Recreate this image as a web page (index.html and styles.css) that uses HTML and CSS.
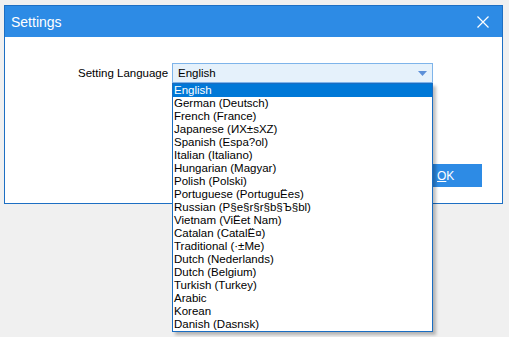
FILE: index.html
```html
<!DOCTYPE html>
<html lang="en">
<head>
    <meta charset="UTF-8">
    <title>Settings</title>
    <link rel="stylesheet" href="styles.css">
</head>
<body>
    <div class="dialog">
        <div class="titlebar">
            <span class="title">Settings</span>
            <button class="close" type="button" aria-label="Close">
                <svg width="12" height="12" viewBox="0 0 12 12">
                    <path d="M0.5 0.5 L11.5 11.5 M11.5 0.5 L0.5 11.5" stroke="#fff" stroke-width="1.2" fill="none"/>
                </svg>
            </button>
        </div>

        <div class="content">
            <div class="row">
                <label class="label">Setting Language</label>
                <div class="select-wrap">
                    <div class="select">
                        <span>English</span>
                        <svg class="arrow" width="9" height="5" viewBox="0 0 9 5">
                            <path d="M0 0 L9 0 L4.5 5 Z" fill="#5b8fd8"/>
                        </svg>
                    </div>
                    <ul class="dropdown">
                        <li class="selected">English</li>
                        <li>German (Deutsch)</li>
                        <li>French (France)</li>
                        <li>Japanese (ИХ±sXZ)</li>
                        <li>Spanish (Espa?ol)</li>
                        <li>Italian (Italiano)</li>
                        <li>Hungarian (Magyar)</li>
                        <li>Polish (Polski)</li>
                        <li>Portuguese (PortuguËes)</li>
                        <li>Russian (P§e§r§r§b§Ъ§bl)</li>
                        <li>Vietnam (ViËet Nam)</li>
                        <li>Catalan (CatalË¤)</li>
                        <li>Traditional (·±Me)</li>
                        <li>Dutch (Nederlands)</li>
                        <li>Dutch (Belgium)</li>
                        <li>Turkish (Turkey)</li>
                        <li>Arabic</li>
                        <li>Korean</li>
                        <li>Danish (Dasnsk)</li>
                    </ul>
                </div>
            </div>

            <div class="actions">
                <button class="btn" type="button"><u>O</u>K</button>
            </div>
        </div>
    </div>
</body>
</html>
```

FILE: styles.css
```css
html, body {
    min-height: 100%;
}

body {
    margin: 0;
    padding: 0;
    min-height: 337px;
    background-color: #f0f0f0;
    font-family: 'Liberation Sans', 'Noto Sans', sans-serif;
    font-size: 11.5px;
    color: #000;
}

.dialog {
    margin: 5px 6px 0 4px;
    border: 1px solid #1d6fc3;
    background-color: #fff;
}

.titlebar {
    background-color: #2d8be5;
    height: 31px;
    display: flex;
    align-items: center;
    justify-content: space-between;
    padding: 0 13px 0 6px;
}

.title {
    color: #fff;
    font-size: 14px;
}

.close {
    background: none;
    border: none;
    padding: 0;
    display: flex;
}

.content {
    padding: 26px 20px 16px 73px;
}

.row {
    display: flex;
    align-items: center;
}

.label {
    width: 94px;
    white-space: nowrap;
}

.select-wrap {
    position: relative;
    width: 261px;
}

.select {
    height: 18px;
    border: 1px solid #7eb4ea;
    background-color: #e5f1fb;
    display: flex;
    align-items: center;
    justify-content: space-between;
    padding: 0 5px 0 5px;
}

.dropdown {
    position: absolute;
    top: 20px;
    left: 0;
    width: 259px;
    margin: 0;
    padding: 0;
    list-style: none;
    background-color: #fff;
    border: 1px solid #1a6dc2;
    box-shadow: 3px 3px 3px rgba(0, 0, 0, 0.25);
    z-index: 2;
}

.dropdown li {
    height: 13px;
    line-height: 13px;
    padding-left: 1px;
    white-space: nowrap;
}

.dropdown li.selected {
    background-color: #0078d7;
    color: #fff;
}

.actions {
    display: flex;
    justify-content: flex-end;
    margin-top: 81px;
}

.btn {
    width: 75px;
    height: 23px;
    border: none;
    background-color: #2d8be5;
    color: #fff;
    font-family: inherit;
    font-size: 12px;
    text-align: left;
    padding-left: 30px;
}
```
